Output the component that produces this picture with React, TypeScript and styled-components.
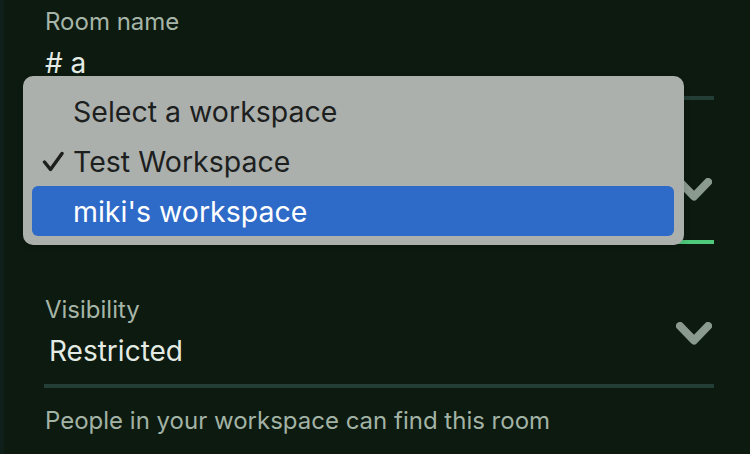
import React from "react";
import styled, { createGlobalStyle } from "styled-components";

const Global = createGlobalStyle`
  html, body { margin: 0; padding: 0; background: #0c1a0f; }
  body { font-family: Inter, "Noto Sans", sans-serif; -webkit-font-smoothing: antialiased; }
  * { box-sizing: border-box; }
`;

const Page = styled.div`
  position: relative;
  width: 750px;
  height: 454px;
  overflow: hidden;
  background: #0c1a0f;
  border-left: 4px solid #0f1f19;
  padding: 8px 36px 0 40px;
  display: flex;
  flex-direction: column;
  gap: 52px;
`;

const Field = styled.div<{ $active?: boolean }>`
  display: grid;
  grid-template-columns: 1fr auto;
  grid-template-rows: auto auto;
  row-gap: 10px;
  padding-bottom: 16px;
  border-bottom: 4px solid ${(p) => (p.$active ? "#4fc97b" : "#233d37")};
`;

const Label = styled.div`
  grid-column: 1;
  font-size: 24px;
  line-height: 28px;
  color: #a6b5a8;
  padding-left: 1px;
`;

const Value = styled.div<{ $indent?: number }>`
  grid-column: 1;
  font-size: 28px;
  line-height: 34px;
  color: #e4ebe4;
  padding-left: ${(p) => p.$indent ?? 1}px;
`;

const ChevronWrap = styled.div`
  grid-column: 2;
  grid-row: 1 / span 2;
  align-self: start;
  margin-top: 26px;
  margin-right: 2px;
  width: 36px;
  height: 23px;
  display: flex;
`;

const Helper = styled.div`
  margin-top: -33px;
  font-size: 24px;
  line-height: 28px;
  color: #a2b2a5;
  padding-left: 1px;
`;

const Menu = styled.div`
  position: absolute;
  left: 19px;
  top: 76px;
  width: 661px;
  padding: 10px 10px 9px 9px;
  background: #abb0ad;
  border-radius: 10px;
  box-shadow: 0 2px 6px rgba(0, 0, 0, 0.15);
  display: flex;
  flex-direction: column;
`;

const Item = styled.div<{ $selected?: boolean }>`
  height: 50px;
  display: flex;
  align-items: center;
  border-radius: 6px;
  padding-left: 10px;
  font-size: 28.5px;
  color: ${(p) => (p.$selected ? "#ffffff" : "#1d1e1e")};
  background: ${(p) => (p.$selected ? "#2e6ac8" : "transparent")};
`;

const CheckSlot = styled.span`
  width: 31px;
  height: 22px;
  display: flex;
  align-items: center;
`;

const Chevron = () => (
  <svg width="36" height="23" viewBox="0 0 36 23">
    <polyline
      points="4,4 18,18.5 32,4"
      fill="none"
      stroke="#8a9a8e"
      strokeWidth="8"
      strokeLinecap="round"
      strokeLinejoin="round"
    />
  </svg>
);

const Check = () => (
  <svg width="22" height="21" viewBox="0 0 22 21">
    <polyline
      points="2.5,11 8.5,18.5 20,2.5"
      fill="none"
      stroke="#1d1e1e"
      strokeWidth="3.4"
      strokeLinecap="round"
      strokeLinejoin="round"
    />
  </svg>
);

export default function App() {
  return (
    <>
      <Global />
      <Page>
        <Field>
          <Label>Room name</Label>
          <Value>#&nbsp;a</Value>
        </Field>
        <Field $active>
          <Label>Workspace</Label>
          <Value $indent={5}>Test Workspace</Value>
          <ChevronWrap>
            <Chevron />
          </ChevronWrap>
        </Field>
        <Field>
          <Label>Visibility</Label>
          <Value $indent={5}>Restricted</Value>
          <ChevronWrap>
            <Chevron />
          </ChevronWrap>
        </Field>
        <Helper>People in your workspace can find this room</Helper>
        <Menu>
          <Item>
            <CheckSlot />
            Select a workspace
          </Item>
          <Item>
            <CheckSlot>
              <Check />
            </CheckSlot>
            Test Workspace
          </Item>
          <Item $selected>
            <CheckSlot />
            miki's workspace
          </Item>
        </Menu>
      </Page>
    </>
  );
}
